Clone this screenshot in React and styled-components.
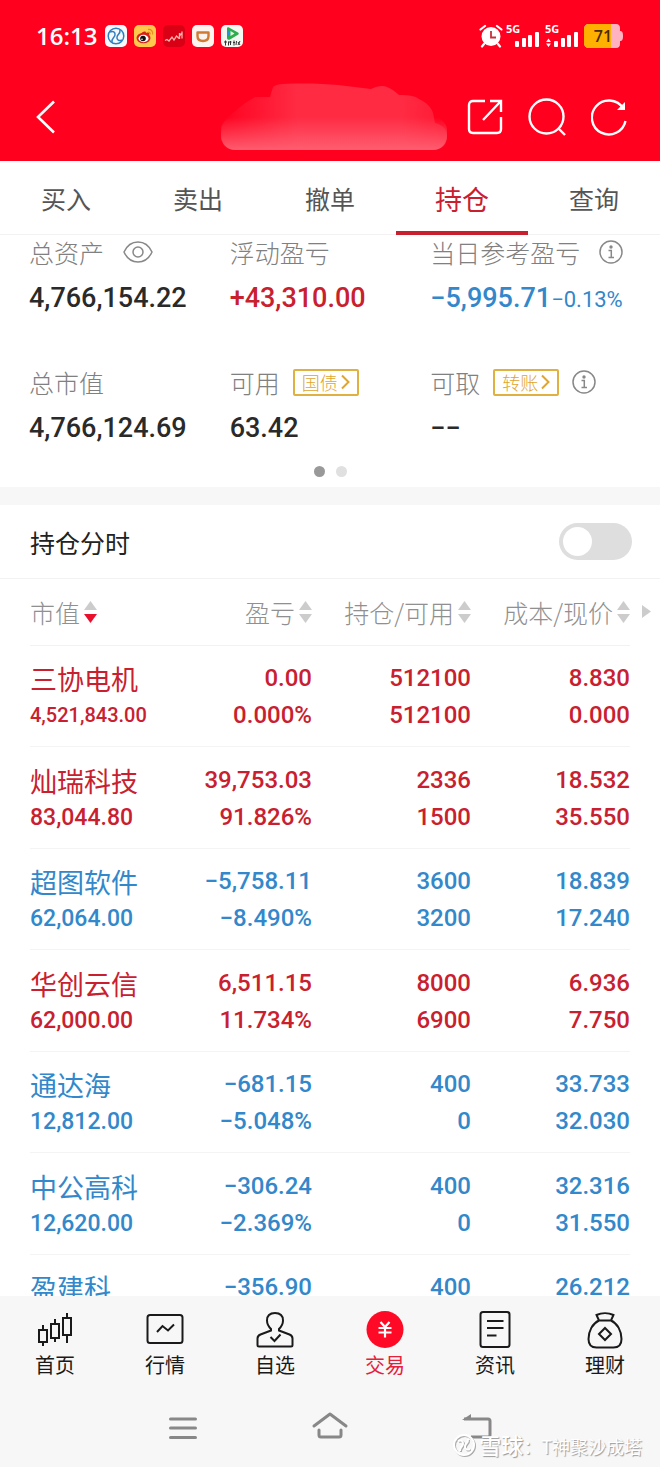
import React, { useState } from "react";
import styled, { createGlobalStyle } from "styled-components";

const RED = "#c9202f";
const BLUE = "#3288ca";
const BRAND = "#ff001e";
const CJK = `"Noto Sans CJK SC", sans-serif`;
const NUM = `Roboto, "Noto Sans CJK SC", sans-serif`;

const GlobalStyle = createGlobalStyle`
  * {
    box-sizing: border-box;
  }
  body {
    margin: 0;
    background: #fff;
    font-family: ${CJK};
    color: #222;
  }
  button {
    padding: 0;
    border: 0;
    background: none;
    font: inherit;
    color: inherit;
    cursor: pointer;
  }
  svg {
    display: block;
    flex: none;
  }
`;

const Page = styled.div`
  display: flex;
  flex-direction: column;
  height: 100vh;
  overflow: hidden;
`;

const Top = styled.header`
  flex: none;
  background: ${BRAND};
  color: #fff;
`;

const StatusBar = styled.div`
  display: flex;
  align-items: center;
  justify-content: space-between;
  height: 72px;
  padding: 0 36px;
`;

const StatusGroup = styled.div`
  display: flex;
  align-items: center;
  gap: ${props => props.$gap}px;
`;

const Clock = styled.span`
  margin-right: 1px;
  font: 600 24px/28px "Open Sans", sans-serif;
`;

const TitleBar = styled.div`
  display: flex;
  align-items: center;
  height: 89px;
  padding: 0 33px 0 36px;
`;

const Masked = styled.div`
  display: flex;
  flex: 1;
  justify-content: flex-end;
  padding-right: 20px;
`;

const Actions = styled.div`
  display: flex;
  align-items: center;
  gap: 25px;
`;

const Tabs = styled.nav`
  display: flex;
  flex: none;
  height: 74px;
  border-bottom: 1px solid #f2f2f2;
`;

const Tab = styled.button`
  flex: 1;
  height: 74px;
  padding-top: 4px;
  border-bottom: 4px solid ${props => (props.$active ? RED : "transparent")};
  font-size: ${props => (props.$active ? 27 : 25)}px;
  color: ${props => (props.$active ? RED : "#555")};
`;

const Content = styled.main`
  flex: 1;
  min-height: 0;
  overflow-y: auto;
  scrollbar-width: none;
`;

const Summary = styled.section`
  padding-bottom: 10px;
  border-bottom: 18px solid #f7f7f7;
`;

const Figures = styled.div`
  display: grid;
  grid-template-columns: repeat(3, 1fr);
  row-gap: 47px;
  padding: 0 29px;
`;

const Label = styled.div`
  display: flex;
  align-items: center;
  height: 34px;
  gap: ${props => props.$gap || 19}px;
  font-size: 25px;
  font-weight: 300;
  color: #808080;
`;

const Amount = styled.div`
  display: flex;
  align-items: baseline;
  height: 40px;
  margin-top: 9px;
  font: 500 27px/40px ${NUM};
  color: ${props => props.$color || "#2a2a2a"};
  white-space: nowrap;
`;

const Percent = styled.span`
  font-size: 22px;
  font-weight: 400;
`;

const Tag = styled.button`
  display: flex;
  align-items: center;
  justify-content: center;
  gap: 3px;
  width: 66px;
  height: 27px;
  border: 2px solid #e0b040;
  border-radius: 2px;
  font-size: 18px;
  line-height: 20px;
  color: #dfa52c;
`;

const Dots = styled.div`
  display: flex;
  justify-content: center;
  gap: 11px;
  margin-top: 18px;
`;

const Dot = styled.i`
  width: 11px;
  height: 11px;
  border-radius: 50%;
  background: ${props => (props.$on ? "#999" : "#e0e0e0")};
`;

const ToggleRow = styled.label`
  display: flex;
  align-items: center;
  justify-content: space-between;
  height: 74px;
  padding: 0 28px 0 30px;
  border-bottom: 1px solid #f2f2f2;
  font-size: 25px;
`;

const Switch = styled.input`
  appearance: none;
  display: flex;
  align-items: center;
  width: 73px;
  height: 37px;
  margin: 0;
  padding: 0 4px;
  border-radius: 19px;
  background: ${props => (props.checked ? BRAND : "#dedede")};

  &::before {
    content: "";
    width: 29px;
    height: 29px;
    margin-left: ${props => (props.checked ? "auto" : 0)};
    border-radius: 50%;
    background: #fff;
  }
`;

const TableWrap = styled.div`
  padding: 0 30px;
`;

const Table = styled.table`
  width: 100%;
  table-layout: fixed;
  border-collapse: collapse;
`;

const HeadCell = styled.th`
  position: relative;
  width: ${props => props.$width};
  height: 66px;
  padding: 0;
  border-bottom: 1px solid #f2f2f2;
  font-weight: 300;
`;

const SortButton = styled.button`
  display: flex;
  align-items: center;
  gap: 4px;
  margin-left: ${props => (props.$left ? 0 : "auto")};
  font-size: 25px;
  color: #909090;
  white-space: nowrap;
`;

const More = styled.span`
  position: absolute;
  top: 26px;
  right: -21px;
`;

const Row = styled.tr`
  height: 101px;
  color: ${props => (props.$down ? BLUE : RED)};

  &:nth-child(even) {
    height: 102px;
  }
`;

const Cell = styled.td`
  padding: 3px 0 0;
  border-bottom: 1px solid #f4f4f4;
  text-align: ${props => (props.$left ? "left" : "right")};
  font: 500 24px/37px ${NUM};
  white-space: nowrap;
`;

const Name = styled.div`
  font: 400 27px/37px ${CJK};
`;

const Value = styled.div`
  font-size: ${props => (props.$small ? 20 : 23)}px;
`;

const Bottom = styled.footer`
  position: relative;
  flex: none;
  background: #f7f7f7;
`;

const Menu = styled.nav`
  display: flex;
  height: 92px;
  padding-top: 12px;
`;

const MenuItem = styled.a`
  display: flex;
  flex: 1;
  flex-direction: column;
  align-items: center;
  gap: 1px;
  font-size: 20px;
  line-height: 28px;
  color: ${props => (props.$active ? "#e5203a" : "#1a1a1a")};
  text-decoration: none;
`;

const SystemBar = styled.div`
  display: flex;
  justify-content: center;
  gap: 105px;
  height: 79px;
  padding-top: 19px;

  button {
    width: 42px;
    height: 42px;
  }
`;

const Watermark = styled.div`
  position: absolute;
  right: 18px;
  bottom: 6px;
  display: flex;
  align-items: center;
  gap: 3px;
  font-size: 18px;
  line-height: 30px;
  color: #fff;
  text-shadow: 1px 1px 1px #999;

  b {
    font-size: 22px;
    font-weight: 500;
  }
`;

const AppIcon = ({ fill, children }) => (
  <svg width="22" height="22" viewBox="0 0 22 22" fill="none">
    <rect width="22" height="22" rx="5" fill={fill} />
    {children}
  </svg>
);

const AppIcons = () => (
  <>
    <AppIcon fill="#f6f9fc">
      <circle cx="11" cy="11" r="7.800" stroke="#2f7fc0" strokeWidth="1.500" />
      <path d="M5 7c3-1.500 5.500 0 5 3s-3.500 3-3 7M17 15c-3 1.500-5.500 0-5-3s3.500-3 3-7" stroke="#2f7fc0" strokeWidth="1.500" />
    </AppIcon>
    <AppIcon fill="#fdc84c">
      <ellipse cx="9.500" cy="13" rx="7" ry="5.300" fill="#d8201c" />
      <path d="M7 9c2-3 5-3 5-1 3-1 4 0 3 2z" fill="#d8201c" />
      <ellipse cx="9.500" cy="13.500" rx="5" ry="3.700" fill="#fff" />
      <circle cx="9" cy="13.500" r="2.800" fill="#111" />
      <circle cx="8" cy="14.300" r="0.800" fill="#fff" />
      <path d="M14 4.500c3-.5 5.500 2 4.500 5M14 7.200c1.500-.2 2.500.8 2.200 2.200" stroke="#ee8a20" strokeWidth="1.300" />
    </AppIcon>
    <AppIcon fill="#d90016">
      <path d="M2 15.500l2-1 2 1.500 3-4 2 3 2.500-4 2 2 3-5M16.500 8v6M19 6.500v7" stroke="#ffb0aa" strokeWidth="1.300" />
    </AppIcon>
    <AppIcon fill="#fbf4ef">
      <path d="M5.500 7.500h11v3.500c0 3.500-2 5-5.500 5s-5.500-1.500-5.500-5z" stroke="#cf7a35" strokeWidth="2.400" strokeLinejoin="round" />
    </AppIcon>
    <AppIcon fill="#f4f8f2">
      <path d="M6 3.500c0-1.200 1-1.600 2-1l9 5c1 .6 1 1.600 0 2.200l-8 4.800c-1.500.8-3 0-3-1.500z" fill="#2cae4e" />
      <path d="M6 3.500L9 8l-3 4.500z" fill="#2a8fe0" />
      <path d="M9.500 6l4 2.500-4 2.500z" fill="#eaf9df" />
      <path d="M3 17h3M4.500 15.500v5M7.500 16.500v4M7.500 17h3M9.500 16v4M12 17.500h2M13 15.500v5M15.500 16l-.5 4M17 17l2 3M19 16l-2 4" stroke="#333" strokeWidth="1" />
    </AppIcon>
  </>
);

const Signal = ({ data }) => (
  <svg width="36" height="34" viewBox="0 -5 36 34" fill="#fff">
    <text x="0" y="9" fontFamily="Open Sans, sans-serif" fontSize="11" fontWeight="700">5G</text>
    {data && <path d="M1 18l2.500-3.500L6 18zM1 19.500h5L3.500 23z" />}
    <rect x="9" y="17" width="4" height="6" rx="1" />
    <rect x="16" y="14" width="4" height="9" rx="1" />
    <rect x="22" y="11" width="4" height="12" rx="1" />
    <rect x="29" y="8" width="4" height="15" rx="1" />
  </svg>
);

const StatusIcons = () => (
  <>
    <svg width="24" height="24" viewBox="0 0 24 24" fill="none">
      <circle cx="12" cy="12.500" r="9.500" fill="#fff" />
      <path d="M1.500 5.500L6 2M18 2l4.500 3.500M5 20l-2 2.500M19 20l2 2.500" stroke="#fff" strokeWidth="2.200" strokeLinecap="round" />
      <path d="M12 7v6.500h5" stroke="#c8303c" strokeWidth="1.800" />
    </svg>
    <Signal />
    <Signal data />
    <svg width="40" height="24" viewBox="0 0 40 24">
      <path d="M5 0h27c3 0 4 2 4 4v3c2 0 3 1 3 5s-1 5-3 5v3c0 2-1 4-4 4H5c-3 0-5-2-5-5V5c0-3 2-5 5-5z" fill="#ffb3c0" />
      <path d="M5 0h22v24H5c-3 0-5-2-5-5V5c0-3 2-5 5-5z" fill="#ffb000" />
      <text x="19" y="18" textAnchor="middle" fontFamily="Open Sans, sans-serif" fontSize="16" fontWeight="600" fill="#4a2c05">71</text>
    </svg>
  </>
);

const InfoIcon = () => (
  <svg width="24" height="24" viewBox="0 0 24 24" fill="none" stroke="#888" strokeWidth="1.500">
    <circle cx="12" cy="12" r="11" />
    <circle cx="12" cy="7" r="1.700" fill="#888" stroke="none" />
    <path d="M9.500 10.500h2.800v7M9.500 17.500h5.500" />
  </svg>
);

const EyeIcon = () => (
  <svg width="30" height="22" viewBox="0 0 30 22" fill="none" stroke="#888" strokeWidth="1.500">
    <path d="M1 11C4 4.500 9 1 15 1s11 3.500 14 10c-3 6.500-8 10-14 10S4 17.500 1 11z" />
    <circle cx="15" cy="11" r="5" />
  </svg>
);

const Chevron = () => (
  <svg width="9" height="16" viewBox="0 0 9 16" fill="none" stroke="#dfa52c" strokeWidth="2">
    <path d="M1 1.500L7.500 8 1 14.500" />
  </svg>
);

const SortIcon = ({ active }) => (
  <svg width="13" height="24" viewBox="0 0 13 24">
    <path d="M6.500 1L13 10H0z" fill="#ccc" />
    <path d="M6.500 23L13 14H0z" fill={active ? "#e8102c" : "#ccc"} />
  </svg>
);

const menu = [
  {
    label: "首页",
    icon: <path d="M7 14v5M3 19h8v12H3zM7 31v4M19 8v5M15 13h8v14h-8zM19 27v4M31 2v5M27 7h8v17h-8zM31 24v8" />,
  },
  {
    label: "行情",
    icon: (
      <>
        <rect x="1.500" y="4" width="35" height="28" rx="2.500" />
        <path d="M11 21l5.500-6 5.500 4.500 6-6" />
      </>
    ),
  },
  {
    label: "自选",
    icon: (
      <>
        <path d="M15 18c-3-3-4-5-4-8.500C11 4.500 14 2 19 2s8 2.500 8 7.500c0 3.500-1 5.500-4 8.500v1.500l10.500 4c2 .8 3 2 3 4V34c0 1-.5 1.500-1.500 1.500H3c-1 0-1.500-.5-1.500-1.500v-6.500c0-2 1-3.200 3-4l10.500-4z" />
        <path d="M14.500 26l4 4 6-6.500" />
      </>
    ),
  },
  {
    label: "交易",
    icon: (
      <>
        <circle cx="19" cy="18.500" r="18.500" fill="#ff0a26" stroke="none" />
        <path d="M14.500 11l4.500 5 4.500-5M12.500 17h13M12.500 21.500h13M19 16v10.500" stroke="#fff" strokeWidth="2.200" />
      </>
    ),
  },
  {
    label: "资讯",
    icon: (
      <>
        <rect x="4.500" y="1" width="29" height="35" rx="2.500" />
        <path d="M11 10h16.500M11 17h16.500M11 24.500h9.500" />
      </>
    ),
  },
  {
    label: "理财",
    icon: (
      <>
        <path d="M13 9.500L10.500 4c5-2.500 12-2.500 17 0L25 9.500zM13 9.500C6.500 12.500 2.500 20 2.500 28c0 6 3 8.500 8 8.500h17c5 0 8-2.500 8-8.500 0-8-4-15.500-10.500-18.500" />
        <path d="M19 17l6 6-6 6-6-6z" />
      </>
    ),
  },
];

const rows = [
  ["三协电机", "4,521,843.00", "0.00", "0.000%", "512100", "512100", "8.830", "0.000"],
  ["灿瑞科技", "83,044.80", "39,753.03", "91.826%", "2336", "1500", "18.532", "35.550"],
  ["超图软件", "62,064.00", "−5,758.11", "−8.490%", "3600", "3200", "18.839", "17.240"],
  ["华创云信", "62,000.00", "6,511.15", "11.734%", "8000", "6900", "6.936", "7.750"],
  ["通达海", "12,812.00", "−681.15", "−5.048%", "400", "0", "33.733", "32.030"],
  ["中公高科", "12,620.00", "−306.24", "−2.369%", "400", "0", "32.316", "31.550"],
  ["盈建科", "", "−356.90", "", "400", "", "26.212", ""],
];

const heads = [
  { label: "市值", width: "27%" },
  { label: "盈亏", width: "20%" },
  { label: "持仓/可用" },
  { label: "成本/现价" },
];

const App = () => {
  const [tab, setTab] = useState("持仓");
  const [chart, setChart] = useState(false);

  return (
    <>
      <GlobalStyle />
      <Page>
        <Top>
          <StatusBar>
            <StatusGroup $gap={7}>
              <Clock>16:13</Clock>
              <AppIcons />
            </StatusGroup>
            <StatusGroup $gap={3}>
              <StatusIcons />
            </StatusGroup>
          </StatusBar>
          <TitleBar>
            <button aria-label="返回">
              <svg width="20" height="34" viewBox="0 0 20 34" fill="none" stroke="#fff" strokeWidth="2.600">
                <path d="M18 1.500L2 17l16 15.500" />
              </svg>
            </button>
            <Masked>
              <svg width="232" height="68" viewBox="0 0 232 68">
                <defs>
                  <linearGradient id="haze" x1="0" y1="0" x2="1" y2="0">
                    <stop offset="0" stopColor="#ff3048" stopOpacity="0" />
                    <stop offset="0.35" stopColor="#ff3048" stopOpacity="0.9" />
                    <stop offset="0.8" stopColor="#ff3048" stopOpacity="0.9" />
                    <stop offset="1" stopColor="#ff3048" stopOpacity="0.5" />
                  </linearGradient>
                  <linearGradient id="glow" x1="0" y1="0" x2="0" y2="1">
                    <stop offset="0" stopColor="#ff6072" stopOpacity="0" />
                    <stop offset="1" stopColor="#ff6072" stopOpacity="0.95" />
                  </linearGradient>
                </defs>
                <path d="M18 67C10 67 6 62 6 55c0-5 2-8 5-10-6 1-9 0-9-2l28-23 10-6h15l3-10c2-2 6-3 10-3 22-1 42 0 55 1l33 4c6-3 12-4 16-2 6 3 9 5 12 8 11 0 16 1 20 4 8 4 12 8 14 14l2 10c8 2 12 6 12 14s-5 13-14 13z" fill="url(#haze)" />
                <rect x="6" y="34" width="226" height="33" rx="14" fill="url(#glow)" />
              </svg>
            </Masked>
            <Actions>
              <button aria-label="分享">
                <svg width="36" height="38" viewBox="0 0 36 38" fill="none" stroke="#fff" strokeWidth="2.400">
                  <path d="M18 3H6C3.500 3 2 4.500 2 7v24c0 2.500 1.500 4 4 4h24c2.500 0 4-1.500 4-4V19M23 3h11v11M34 3L16 22" />
                </svg>
              </button>
              <button aria-label="搜索">
                <svg width="38" height="38" viewBox="0 0 38 38" fill="none" stroke="#fff" strokeWidth="2.400">
                  <circle cx="18.500" cy="18.500" r="17" />
                  <path d="M30 30l7 7" />
                </svg>
              </button>
              <button aria-label="刷新">
                <svg width="36" height="38" viewBox="0 0 36 38" fill="none" stroke="#fff" strokeWidth="2.400">
                  <path d="M34.500 23A17 17 0 1 1 32 10" />
                  <path d="M34 4v8h-8z" fill="#fff" stroke="none" />
                </svg>
              </button>
            </Actions>
          </TitleBar>
        </Top>

        <Tabs>
          {["买入", "卖出", "撤单", "持仓", "查询"].map(name => (
            <Tab key={name} $active={name === tab} onClick={() => setTab(name)}>
              {name}
            </Tab>
          ))}
        </Tabs>

        <Content>
          <Summary>
            <Figures>
              <div>
                <Label>总资产 <EyeIcon /></Label>
                <Amount>4,766,154.22</Amount>
              </div>
              <div>
                <Label>浮动盈亏</Label>
                <Amount $color={RED}>+43,310.00</Amount>
              </div>
              <div>
                <Label>当日参考盈亏 <InfoIcon /></Label>
                <Amount $color={BLUE}>−5,995.71<Percent>−0.13%</Percent></Amount>
              </div>
              <div>
                <Label>总市值</Label>
                <Amount>4,766,124.69</Amount>
              </div>
              <div>
                <Label $gap={13}>可用 <Tag>国债<Chevron /></Tag></Label>
                <Amount>63.42</Amount>
              </div>
              <div>
                <Label $gap={13}>可取 <Tag>转账<Chevron /></Tag><InfoIcon /></Label>
                <Amount>−−</Amount>
              </div>
            </Figures>
            <Dots>
              <Dot $on />
              <Dot />
            </Dots>
          </Summary>

          <ToggleRow>
            持仓分时
            <Switch type="checkbox" checked={chart} onChange={e => setChart(e.target.checked)} />
          </ToggleRow>

          <TableWrap>
            <Table>
              <thead>
                <tr>
                  {heads.map(({ label, width }, i) => (
                    <HeadCell key={label} $width={width}>
                      <SortButton $left={i === 0}>
                        {label}
                        <SortIcon active={i === 0} />
                      </SortButton>
                      {i === heads.length - 1 && (
                        <More>
                          <svg width="9" height="13" viewBox="0 0 9 13">
                            <path d="M0 0l9 6.500L0 13z" fill="#ccc" />
                          </svg>
                        </More>
                      )}
                    </HeadCell>
                  ))}
                </tr>
              </thead>
              <tbody>
                {rows.map(([name, value, profit, rate, held, free, cost, price]) => (
                  <Row key={name} $down={profit.startsWith("−")}>
                    <Cell $left>
                      <Name>{name}</Name>
                      <Value $small={value.length > 10}>{value || "\u00a0"}</Value>
                    </Cell>
                    <Cell>{profit}<br />{rate || "\u00a0"}</Cell>
                    <Cell>{held}<br />{free || "\u00a0"}</Cell>
                    <Cell>{cost}<br />{price || "\u00a0"}</Cell>
                  </Row>
                ))}
              </tbody>
            </Table>
          </TableWrap>
        </Content>

        <Bottom>
          <Menu>
            {menu.map(({ label, icon }) => (
              <MenuItem key={label} href="#" $active={label === "交易"}>
                <svg width="38" height="42" viewBox="0 -3 38 42" fill="none" stroke="#1a1a1a" strokeWidth="2">
                  {icon}
                </svg>
                {label}
              </MenuItem>
            ))}
          </Menu>
          <SystemBar>
            <button aria-label="最近任务">
              <svg width="42" height="42" viewBox="0 0 42 42" fill="none" stroke="#888" strokeWidth="3" strokeLinecap="round">
                <path d="M8.500 12h25M8.500 21h25M8.500 30.500h25" />
              </svg>
            </button>
            <button aria-label="主页">
              <svg width="42" height="42" viewBox="0 0 42 42" fill="none" stroke="#888" strokeWidth="3" strokeLinecap="round" strokeLinejoin="round">
                <path d="M5 19L21 7l16 12M10 23v5c0 1.500.5 2 2 2h18c1.500 0 2-.5 2-2v-5" />
              </svg>
            </button>
            <button aria-label="后退">
              <svg width="42" height="42" viewBox="0 0 42 42" fill="none" stroke="#888" strokeWidth="3">
                <path d="M8 12h24c1.500 0 2 .5 2 2v14c0 1.500-.5 2-2 2H15" />
                <path d="M6 13l9-6v6z" fill="#888" stroke="none" />
              </svg>
            </button>
          </SystemBar>
          <Watermark>
            <svg width="23" height="23" viewBox="0 0 23 23" fill="none" strokeWidth="2">
              <g stroke="#aaa">
                <circle cx="12" cy="12" r="10" />
                <path d="M6 8c3-1.500 5.500 0 5 3s-3.500 3-3 7M18 16c-3 1.500-5.500 0-5-3s3.500-3 3-7" />
              </g>
              <g stroke="#fff">
                <circle cx="11" cy="11" r="10" />
                <path d="M5 7c3-1.500 5.500 0 5 3s-3.500 3-3 7M17 15c-3 1.500-5.500 0-5-3s3.500-3 3-7" />
              </g>
            </svg>
            <span><b>雪球</b>：T神聚沙成塔</span>
          </Watermark>
        </Bottom>
      </Page>
    </>
  );
};

export default App;
